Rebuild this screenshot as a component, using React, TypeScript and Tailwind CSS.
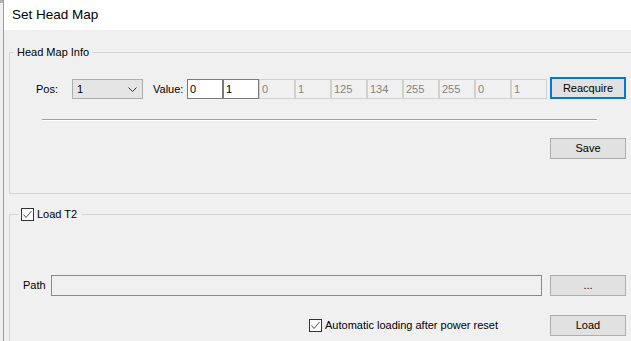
import React from "react";

const font = { fontFamily: '"Liberation Sans", Arial, sans-serif' };

const CheckBox = () => (
  <svg width="13" height="13" viewBox="0 0 13 13" className="shrink-0">
    <rect x="0.5" y="0.5" width="12" height="12" fill="#ffffff" stroke="#333333" />
    <path d="M2.5 6.5 L5 9.5 L10.5 3" fill="none" stroke="#4d4d4d" strokeWidth="1" />
  </svg>
);

const Chevron = () => (
  <svg width="9" height="5" viewBox="0 0 9 5">
    <path d="M0.5 0.5 L4.5 4.5 L8.5 0.5" fill="none" stroke="#333333" strokeWidth="1" />
  </svg>
);

const Button = ({ label, active }: { label: string; active?: boolean }) => (
  <button
    className={
      active
        ? "w-[76px] h-[22px] bg-[#e1e1e1] border-2 border-[#0078d7] text-black flex items-center justify-center"
        : "w-[76px] h-[21px] bg-[#e1e1e1] border border-[#adadad] text-black flex items-center justify-center"
    }
  >
    {label}
  </button>
);

const values = [
  { v: "0", enabled: true },
  { v: "1", enabled: true },
  { v: "0" },
  { v: "1" },
  { v: "125" },
  { v: "134" },
  { v: "255" },
  { v: "255" },
  { v: "0" },
  { v: "1" },
];

export default function App() {
  return (
    <div
      className="w-[631px] h-[341px] overflow-hidden flex bg-[#f0f0f0] text-[11px] text-black"
      style={font}
    >
      <div className="w-[4px] shrink-0 border-r border-[#9c9c9c] bg-[#f0f0f0] flex flex-col">
        <div className="h-[3px] shrink-0 bg-[#b4b4b4]" />
      </div>
      <div className="flex-1 flex flex-col min-w-0">
        <div className="h-[30px] shrink-0 bg-white flex items-center pl-[8px] text-[13.5px]">Set Head Map</div>

        <div className="pl-[5px] shrink-0">
          <fieldset className="mt-[14px] w-[640px] h-[150px] border border-[#d5d5d5]">
            <legend className="ml-[4px] px-[3px] leading-[16px]">Head Map Info</legend>

            <div className="mt-[17px] flex items-start h-[22px]">
              <span className="ml-[26px] w-[36px] mt-[4px]">Pos:</span>
              <div className="mt-[2px] w-[71px] h-[20px] bg-[#e5e5e5] border border-[#adadad] flex items-center justify-between pl-[4px] pr-[5px]">
                <span>1</span>
                <Chevron />
              </div>
              <span className="ml-[10px] w-[34px] mt-[4px]">Value:</span>
              <div className="flex mt-[2px]">
                {values.map((item, i) => (
                  <div
                    key={i}
                    className={
                      item.enabled
                        ? "w-[36px] h-[20px] bg-white border border-[#7a7a7a] pl-[2px] flex items-center text-black"
                        : "w-[36px] h-[20px] bg-[#f0f0f0] border border-[#d0d0d0] pl-[2px] flex items-center text-[#838383]"
                    }
                  >
                    {item.v}
                  </div>
                ))}
              </div>
              <div className="ml-[3px]">
                <Button label="Reacquire" active />
              </div>
            </div>

            <div className="mt-[20px] ml-[32px] w-[555px] border-t border-[#a0a0a0] border-b border-b-white" />

            <div className="mt-[17px] ml-[540px]">
              <Button label="Save" />
            </div>
          </fieldset>

          <fieldset className="mt-[12px] w-[640px] h-[200px] border border-[#d5d5d5]">
            <legend className="ml-[9px] px-[2px] pr-[5px] leading-[16px] flex items-center gap-[3px]">
              <CheckBox />
              <span>Load T2</span>
            </legend>

            <div className="mt-[53px] flex items-center">
              <span className="ml-[13px] w-[28px]">Path</span>
              <div className="w-[491px] h-[21px] bg-[#f0f0f0] border border-[#8a8a8a]" />
              <div className="ml-[8px]">
                <Button label="..." />
              </div>
            </div>

            <div className="mt-[19px] flex items-center">
              <label className="ml-[299px] w-[241px] flex items-center gap-[3px]">
                <CheckBox />
                <span>Automatic loading after power reset</span>
              </label>
              <Button label="Load" />
            </div>
          </fieldset>
        </div>
      </div>
    </div>
  );
}
